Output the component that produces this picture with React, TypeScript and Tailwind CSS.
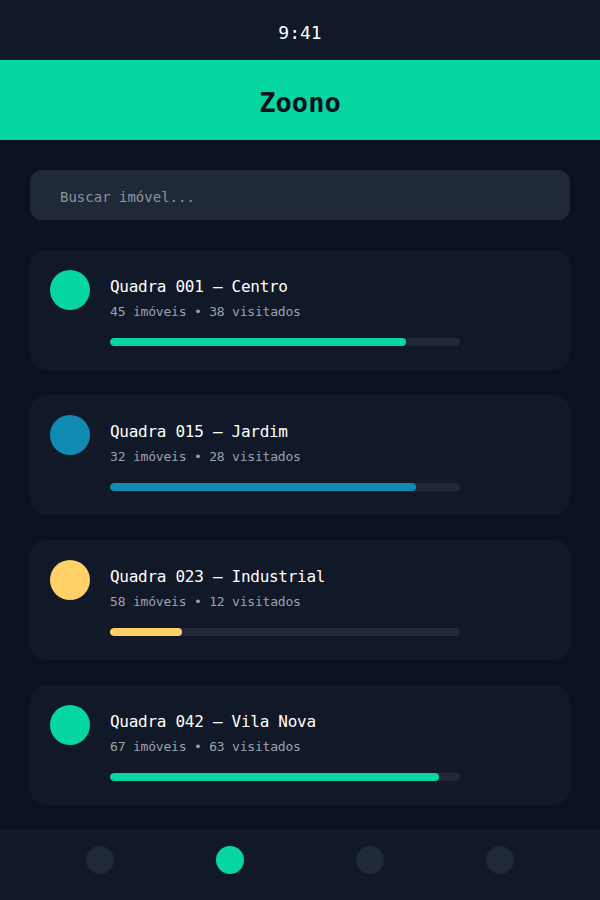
import React from "react";

const quadras = [
  { id: 1, name: "Quadra 001 — Centro", total: 45, visited: 38, color: "#06d6a0" },
  { id: 2, name: "Quadra 015 — Jardim", total: 32, visited: 28, color: "#118ab2" },
  { id: 3, name: "Quadra 023 — Industrial", total: 58, visited: 12, color: "#ffd166" },
  { id: 4, name: "Quadra 042 — Vila Nova", total: 67, visited: 63, color: "#06d6a0" },
];

const App = () => {
  return (
    <div className="w-[600px] h-[900px] flex flex-col bg-[#0b1120] font-['DejaVu_Sans_Mono',monospace] overflow-hidden">
      {/* status bar */}
      <div className="h-[60px] flex items-center justify-center pt-[6px] bg-[#111827] text-white text-lg">9:41</div>

      {/* header */}
      <div className="h-20 flex items-center justify-center pt-[6px] bg-[#06d6a0]">
        <h1 className="text-[27px] font-bold text-[#0b1120]">Zoono</h1>
      </div>

      <div className="flex-1 px-[30px] pt-[30px]">
        <input
          type="text"
          placeholder="Buscar imóvel..."
          className="w-full h-[50px] rounded-xl bg-[#1f2937] px-[30px] pt-[4px] text-sm text-white placeholder:text-[#8b95a5] outline-none"
        />

        <ul className="mt-[30px] flex flex-col gap-[25px]">
          {quadras.map((q) => (
            <li key={q.id} className="bg-[#111827] rounded-2xl px-5 pt-5 pb-6 flex gap-5">
              <div className="w-10 h-10 rounded-full shrink-0" style={{ backgroundColor: q.color }} />
              <div className="flex flex-col">
                <h3 className="mt-[5px] text-base leading-6 tracking-[-0.28px] text-white">{q.name}</h3>
                <p className="mt-[3px] text-[13px] leading-5 tracking-[-0.2px] text-[#9ca3af]">
                  {q.total} imóveis • {q.visited} visitados
                </p>
                <div className="mt-[16px] w-[350px] h-2 rounded-full bg-[#1f2937] overflow-hidden">
                  <div
                    className="h-full rounded-full"
                    style={{ width: `${(q.visited / q.total) * 100}%`, backgroundColor: q.color }}
                  />
                </div>
              </div>
            </li>
          ))}
        </ul>
      </div>

      {/* bottom nav */}
      <nav className="h-[70px] bg-[#111827] flex justify-center pt-4">
        <div className="w-7 h-7 rounded-full bg-[#1f2937]" />
        <div className="w-7 h-7 rounded-full bg-[#06d6a0] ml-[102px]" />
        <div className="w-7 h-7 rounded-full bg-[#1f2937] ml-[112px]" />
        <div className="w-7 h-7 rounded-full bg-[#1f2937] ml-[102px]" />
      </nav>
    </div>
  );
};

export default App;
